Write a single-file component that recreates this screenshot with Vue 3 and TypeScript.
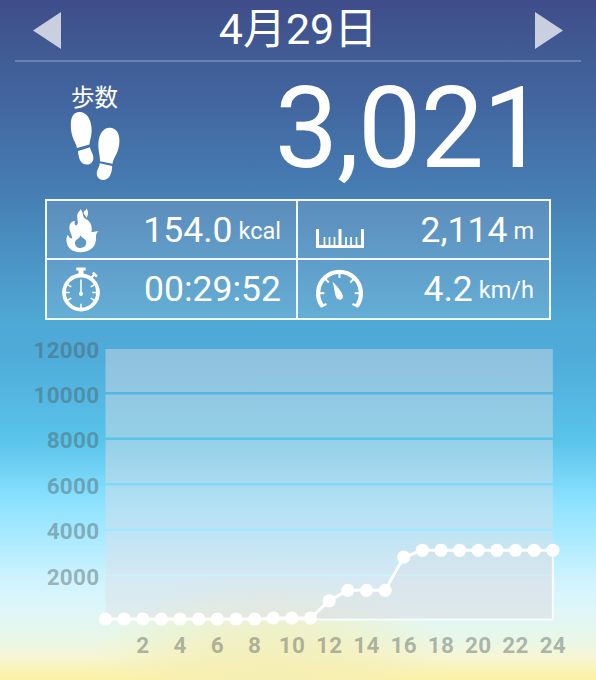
<script setup lang="ts">
interface Point {
  x: number
  y: number
}

const steps: number[] = [
  0, 0, 0, 0, 0, 0, 0, 0, 0, 45, 45, 45, 800, 1260, 1260, 1260, 2720,
  3021, 3021, 3021, 3021, 3021, 3021, 3021, 3021,
]
const yTicks: number[] = [12000, 10000, 8000, 6000, 4000, 2000]
const xTicks: number[] = Array.from({ length: 12 }, (_, i) => (i + 1) * 2)

const left = 105.5
const base = 619
const hourWidth = 18.64
const toX = (hour: number): number => left + hour * hourWidth
const toY = (value: number): number => base - (value * 45.5) / 2000

const points: Point[] = steps.map((value, hour) => ({ x: toX(hour), y: toY(value) }))
const line: string = points.map((p) => `${p.x},${p.y}`).join(' ')
const area: string = `${line} ${toX(24)},${base} ${left},${base}`

const bands = [
  { y: 349, h: 43 },
  { y: 394.5, h: 43 },
  { y: 440, h: 43 },
  { y: 485.5, h: 43 },
  { y: 531, h: 43.5 },
  { y: 576, h: 43 },
]
const gaugeTicks: number[] = [-90, -45, 0, 45, 90]
const watchTicks: number[] = [60, 90, 120, 180, 240, 270, 300]
</script>

<template>
  <main class="screen">
    <header class="date-bar">
      <svg class="arrow" viewBox="0 0 28 37"><path d="M0 18.500 28 0V37Z" /></svg>
      <h1>4月29日</h1>
      <svg class="arrow" viewBox="0 0 28 37"><path d="M28 18.500 0 0V37Z" /></svg>
    </header>

    <section class="summary">
      <div class="label">
        <span>歩数</span>
        <svg viewBox="70 112 50 70">
          <path d="M79.500 112C87 112 91.600 120 91.600 130C91.600 137 89.800 140 89.500 144.500L77 148C76 142 70.800 138 70.800 125C70.800 117 73.500 112 79.500 112Z" />
          <path d="M78 151 90 147.300C90.600 151.500 93.400 153.500 93.400 158C93.400 162 90.500 164.600 87 164.600C80.500 164.600 78.500 158 78 151Z" />
          <path d="M110.500 127.800C117 128.500 119.800 134.500 119.400 142C119 153 113.500 157 112.500 163.800L100 161.300C100.200 155 98 151.500 98.400 143C98.900 133.500 104 127.200 110.500 127.800Z" />
          <path d="M99.700 163.300 112.200 166C112 173 109.500 180 103 180C99.500 180 96.500 177 96.800 173C97 169 99.500 168 99.700 163.300Z" />
        </svg>
      </div>
      <strong>3,021</strong>
    </section>

    <section class="stats">
      <div class="stat">
        <svg class="flame" viewBox="66 208 33 45">
          <path fill-rule="evenodd" d="M80.500 209C84.500 214 81.500 217 86 219C90.500 221.500 92.500 226 91.500 232C93 232.500 94.500 231 98.500 231.300C95 233.500 96.500 237.500 95.800 241C94.800 248 88.500 252.300 80 252.300C71 252.300 65.800 246 66.500 239C66.600 237 67.200 235.500 68 235C69 237 70 238.500 72 238.500C73 236 68.500 231 69.500 226C70.200 222 73.500 220.600 75 221C74.500 223 74.200 224.500 76 225.500C80 223.500 76 218 77.500 214C78.200 211.500 80.500 211 80.500 209ZM80.300 235.300C79.500 239.500 75 239 75 243C75 246.500 77.500 248 80.300 248C84 248 86.500 245.500 86.200 242C86 238.500 82 238.500 80.300 235.300Z" />
          <path d="M86.700 208.500C88.700 212.500 88.500 214.500 86.500 218C85.500 214.500 82.500 214 84 211.500C84.800 210.500 86.500 210 86.700 208.500Z" />
        </svg>
        <p>154.0<small>kcal</small></p>
      </div>
      <div class="stat">
        <svg class="ruler" viewBox="0 0 48 45">
          <path d="M1.500 20V37.500H46.500V20M24 20V37" fill="none" stroke="#fff" stroke-width="3" />
          <path d="M8.500 28V36M13.500 28V36M18.500 28V36M30 28V36M35 28V36M40.500 28V36" stroke="#fff" stroke-width="1.700" />
        </svg>
        <p>2,114<small>m</small></p>
      </div>
      <div class="stat">
        <svg class="watch" viewBox="62 267 38 45">
          <circle cx="81" cy="292.500" r="17" fill="none" stroke="#fff" stroke-width="3.800" />
          <path d="M76.300 267.500H85.700V270.500H83.500V275H78.500V270.500H76.300Z" />
          <path d="M91 278 94 275M92.800 272.700 97 276.500" stroke="#fff" stroke-width="2.400" />
          <path d="M81 279.500V294" stroke="#fff" stroke-width="1.600" />
          <circle cx="81" cy="293.800" r="2.100" />
          <path v-for="angle in watchTicks" :key="angle" d="M81 277V281.300" stroke="#fff" stroke-width="1.500" :transform="`rotate(${angle} 81 292.5)`" />
        </svg>
        <p>00:29:52</p>
      </div>
      <div class="stat">
        <svg class="gauge" viewBox="316 267 48 45">
          <path d="M322.700 306.500A21.400 21.400 0 1 1 356.300 306.500" fill="none" stroke="#fff" stroke-width="4.300" />
          <path d="M321.500 306.500 326.500 304M357.500 306.500 352.500 304" stroke="#fff" stroke-width="2" />
          <path v-for="angle in gaugeTicks" :key="angle" d="M339.500 272.500V278" stroke="#fff" stroke-width="2" :transform="`rotate(${angle} 339.500 293.200)`" />
          <path d="M332.500 281.500C337 286 342.700 292.500 342.900 296.500C343 299.500 340 300.800 337.500 298.800C334.500 296.500 334.500 287.500 332.500 281.500Z" />
        </svg>
        <p>4.2<small>km/h</small></p>
      </div>
    </section>

    <svg class="chart" viewBox="0 320 596 360">
      <rect v-for="band in bands" :key="band.y" class="band" :x="left" :y="band.y" :width="hourWidth * 24" :height="band.h" />
      <polygon class="area" :points="area" />
      <path class="frame" :d="`M${left} ${base + 0.5}H${toX(24)}V${toY(3021)}`" />
      <polyline class="line" :points="line" />
      <circle v-for="point in points" :key="point.x" class="dot" :cx="point.x" :cy="point.y" r="6.600" />
      <text v-for="(tick, i) in yTicks" :key="tick" class="tick y" x="99.500" :y="357.600 + i * 45.400">{{ tick }}</text>
      <text v-for="tick in xTicks" :key="tick" class="tick x" :x="toX(tick)" y="653">{{ tick }}</text>
    </svg>
  </main>
</template>

<style>
body {
  margin: 0;
}
</style>

<style scoped>
.screen {
  width: 596px;
  height: 680px;
  overflow: hidden;
  box-sizing: border-box;
  display: flex;
  flex-direction: column;
  color: #fff;
  font-family: Roboto, "Noto Sans CJK JP", sans-serif;
  background:
    radial-gradient(ellipse 190px 105px at 270px 680px, rgba(244, 238, 180, 0.9), rgba(244, 238, 180, 0.65) 45%, rgba(244, 238, 180, 0) 100%),
    linear-gradient(#3f4d8a 0, #405d96 60px, #42659f 100px, #4680b5 200px, #4fa8d4 320px, #4fabd9 355px, #59c4ea 440px, #8be1ff 500px, #a3e8ff 530px, #cff3ff 580px, #def7f8 610px, #e9f7e8 640px, #f5f6d8 655px, #fdf2a0 680px);
}

svg {
  display: block;
  flex: none;
  fill: #fff;
}

.date-bar {
  flex: none;
  height: 62px;
  box-sizing: border-box;
  margin: 0 15px;
  padding: 0 18px;
  display: flex;
  justify-content: space-between;
  align-items: center;
  border-bottom: 2px solid rgba(255, 255, 255, 0.22);
}

.arrow {
  width: 28px;
  height: 37px;
  opacity: 0.72;
}

h1 {
  margin: 0;
  padding-bottom: 2px;
  font-size: 43px;
  line-height: 56px;
  font-weight: 400;
}

.summary {
  flex: none;
  height: 137px;
  padding: 0 51px 0 70px;
  display: flex;
  justify-content: space-between;
}

.label {
  padding-top: 20px;
  width: 50px;
}

.label span {
  display: block;
  padding: 2px 0 0 1px;
  font-size: 23.5px;
  line-height: 28px;
  white-space: nowrap;
}

.label svg {
  width: 50px;
  height: 70px;
}

.summary strong {
  font-size: 113px;
  line-height: 134px;
  letter-spacing: -1.2px;
  font-weight: 400;
}

.stats {
  flex: none;
  width: 506px;
  height: 121px;
  margin-left: 45px;
  box-sizing: border-box;
  border: 2px solid #f3f9fc;
  display: grid;
  grid-template-columns: 249px 1fr;
  grid-template-rows: 57px 1fr;
  gap: 2px;
  background: linear-gradient(#f3f9fc, #f3f9fc) 249px 0 / 2px 100% no-repeat,
    linear-gradient(#f3f9fc, #f3f9fc) 0 57px / 100% 2px no-repeat,
    rgba(220, 215, 225, 0.15);
}

.stat {
  display: flex;
  align-items: center;
  justify-content: space-between;
  padding: 0 15px;
}

.stat:nth-child(even) {
  padding-left: 18px;
}

.stat p {
  margin: 0;
  font-size: 35.5px;
  line-height: 44px;
  white-space: nowrap;
}

.stat small {
  font-size: 23.5px;
  line-height: 0;
  vertical-align: 3px;
  margin-left: 6px;
}

.flame {
  width: 33px;
  height: 45px;
  margin: 2px 0 0 4px;
}

.watch {
  width: 38px;
  height: 45px;
}

.ruler,
.gauge {
  width: 48px;
  height: 45px;
}

.ruler {
  margin-top: 4px;
}

.chart {
  width: 596px;
  height: 360px;
}

.band {
  fill: rgba(222, 222, 228, 0.45);
}

.area {
  fill: rgba(222, 224, 228, 0.32);
}

.frame {
  fill: none;
  stroke: #f8fcfc;
  stroke-width: 2;
}

.line {
  fill: none;
  stroke: #fff;
  stroke-width: 3;
  stroke-linejoin: round;
}

.dot {
  fill: #fff;
}

.tick {
  font-size: 22.5px;
  font-weight: 700;
  letter-spacing: 0.3px;
  fill: rgba(75, 85, 85, 0.42);
}

.tick.y {
  text-anchor: end;
}

.tick.x {
  text-anchor: middle;
}
</style>
